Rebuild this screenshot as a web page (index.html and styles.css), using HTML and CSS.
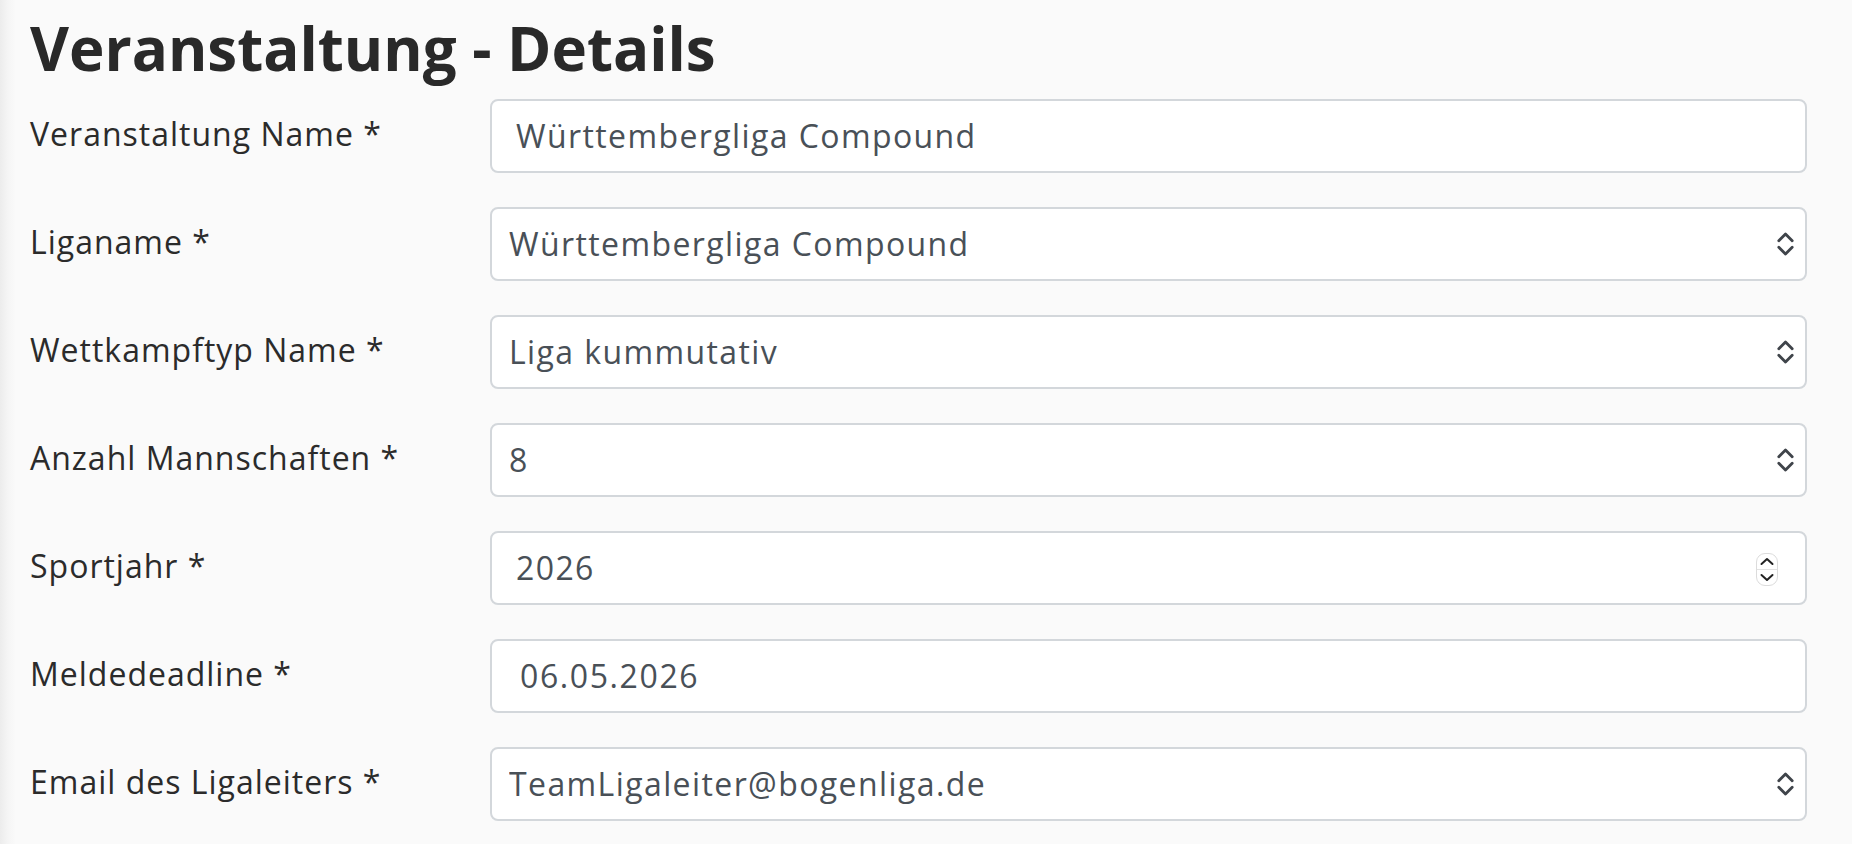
FILE: index.html
```html
<!DOCTYPE html>
<html lang="de">
<head>
    <meta charset="UTF-8">
    <meta name="viewport" content="width=device-width, initial-scale=1.0">
    <title>Veranstaltung - Details</title>
    <link rel="stylesheet" href="styles.css">
</head>
<body>
    <div class="page">
        <h1 class="title">Veranstaltung - Details</h1>

        <form class="details-form">
            <div class="form-row">
                <label for="eventName" class="form-label">Veranstaltung Name *</label>
                <input id="eventName" class="form-control" type="text" value="Württembergliga Compound">
            </div>

            <div class="form-row">
                <label for="ligaName" class="form-label">Liganame *</label>
                <div class="select-wrap">
                    <select id="ligaName" class="form-select">
                        <option>Württembergliga Compound</option>
                    </select>
                    <svg class="select-icon" viewBox="0 0 17 24" aria-hidden="true">
                        <path d="M1.8 8.8 L8.5 2 L15.2 8.8 M1.8 15.2 L8.5 22 L15.2 15.2"/>
                    </svg>
                </div>
            </div>

            <div class="form-row">
                <label for="wettkampftyp" class="form-label">Wettkampftyp Name *</label>
                <div class="select-wrap">
                    <select id="wettkampftyp" class="form-select">
                        <option>Liga kummutativ</option>
                    </select>
                    <svg class="select-icon" viewBox="0 0 17 24" aria-hidden="true">
                        <path d="M1.8 8.8 L8.5 2 L15.2 8.8 M1.8 15.2 L8.5 22 L15.2 15.2"/>
                    </svg>
                </div>
            </div>

            <div class="form-row">
                <label for="mannschaften" class="form-label">Anzahl Mannschaften *</label>
                <div class="select-wrap">
                    <select id="mannschaften" class="form-select">
                        <option>8</option>
                    </select>
                    <svg class="select-icon" viewBox="0 0 17 24" aria-hidden="true">
                        <path d="M1.8 8.8 L8.5 2 L15.2 8.8 M1.8 15.2 L8.5 22 L15.2 15.2"/>
                    </svg>
                </div>
            </div>

            <div class="form-row">
                <label for="sportjahr" class="form-label">Sportjahr *</label>
                <div class="select-wrap">
                    <input id="sportjahr" class="form-control" type="number" value="2026">
                    <div class="spinner" aria-hidden="true">
                        <svg viewBox="0 0 20 31">
                            <line class="spinner-divider" x1="0" y1="15.5" x2="20" y2="15.5"/>
                            <path d="M4.5 10 L10 5 L15.5 10 M4.5 21 L10 26 L15.5 21"/>
                        </svg>
                    </div>
                </div>
            </div>

            <div class="form-row">
                <label for="meldedeadline" class="form-label">Meldedeadline *</label>
                <input id="meldedeadline" class="form-control date-input" type="text" value="06.05.2026">
            </div>

            <div class="form-row">
                <label for="ligaleiter" class="form-label">Email des Ligaleiters *</label>
                <div class="select-wrap">
                    <select id="ligaleiter" class="form-select">
                        <option>TeamLigaleiter@bogenliga.de</option>
                    </select>
                    <svg class="select-icon" viewBox="0 0 17 24" aria-hidden="true">
                        <path d="M1.8 8.8 L8.5 2 L15.2 8.8 M1.8 15.2 L8.5 22 L15.2 15.2"/>
                    </svg>
                </div>
            </div>
        </form>
    </div>
</body>
</html>
```

FILE: styles.css
```css
html, body {
    height: 100%;
}
body {
    margin: 0;
    font-family: "Open Sans", "Liberation Sans", sans-serif;
    color: #2b2b2b;
    background: linear-gradient(to right, #ececec 0px, #f5f5f5 8px, #fafafa 16px);
    overflow: hidden;
}
.page {
    padding: 0 45px 0 30px;
}
.title {
    margin: 0;
    padding-top: 12px;
    font-size: 60px;
    font-weight: 700;
    line-height: 72px;
    color: #292929;
    letter-spacing: 0;
}
.details-form {
    margin-top: 15px;
}
.form-row {
    display: grid;
    grid-template-columns: 460px 1fr;
    align-items: center;
    margin-bottom: 34px;
}
.form-label {
    font-size: 32px;
    line-height: 48px;
    padding-bottom: 5px;
    letter-spacing: 1px;
}
.form-control,
.form-select {
    box-sizing: border-box;
    width: 100%;
    height: 74px;
    margin: 0;
    padding: 0 24px 1px;
    font-family: inherit;
    font-size: 32px;
    letter-spacing: 1.4px;
    color: #495057;
    background: #fff;
    border: 2px solid #d3d7db;
    border-radius: 8px;
    outline: none;
}
.form-select {
    padding-left: 17px;
    appearance: none;
    -webkit-appearance: none;
}
.form-control[type="number"] {
    -moz-appearance: textfield;
}
.form-control::-webkit-inner-spin-button,
.form-control::-webkit-outer-spin-button {
    -webkit-appearance: none;
    margin: 0;
}
.date-input {
    padding-left: 28px;
    letter-spacing: 1.6px;
}
.select-wrap {
    position: relative;
}
.select-icon {
    position: absolute;
    right: 13px;
    top: 50%;
    width: 17px;
    height: 24px;
    transform: translateY(-50%);
    fill: none;
    stroke: #3f444a;
    stroke-width: 2.8;
    stroke-linecap: round;
    stroke-linejoin: round;
    pointer-events: none;
}
.spinner {
    position: absolute;
    right: 29px;
    top: 50%;
    width: 20px;
    height: 31px;
    margin-top: -15px;
    border: 1px solid #dcdcdc;
    border-radius: 9px;
    background: #fff;
    pointer-events: none;
}
.spinner svg {
    display: block;
    width: 20px;
    height: 31px;
    fill: none;
    stroke: #222;
    stroke-width: 2;
    stroke-linecap: round;
    stroke-linejoin: round;
}
.spinner svg .spinner-divider {
    stroke: #e2e2e2;
    stroke-width: 1;
}
```
